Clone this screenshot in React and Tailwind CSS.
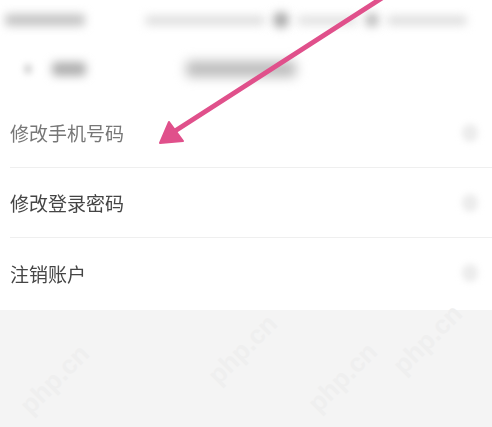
import React from "react";

const rows = ["修改手机号码", "修改登录密码", "注销账户"];

const wm = { fontFamily: '"Liberation Sans", sans-serif' };

export default function App() {
  return (
    <div className="relative w-[492px] h-[427px] overflow-hidden bg-[#f4f4f4]" style={{ fontFamily: '"Noto Sans CJK SC", "Noto Sans", sans-serif' }}>
      <div className="bg-white">
        {/* status bar */}
        <div className="h-[40px] flex items-center px-[5px] gap-[60px]">
          <div className="w-[80px] h-[12px] rounded bg-[#c4c4c4] blur-[5px]" />
          <div className="flex-1 flex items-center gap-2">
            <div className="w-[120px] h-[9px] rounded bg-[#dcdcdc] blur-[5px]" />
            <div className="w-[16px] h-[16px] rounded-full bg-[#a8a8a8] blur-[5px]" />
            <div className="w-[60px] h-[9px] rounded bg-[#e0e0e0] blur-[5px]" />
            <div className="w-[14px] h-[14px] rounded-full bg-[#bababa] blur-[5px]" />
            <div className="w-[80px] h-[9px] rounded bg-[#dcdcdc] blur-[5px]" />
          </div>
        </div>
        {/* nav bar */}
        <div className="h-[58px] flex items-center">
          <div className="ml-[24px] w-[8px] h-[10px] rounded-full bg-[#d4d4d4] blur-[3px]" />
          <div className="ml-[20px] w-[34px] h-[14px] rounded bg-[#b0b0b0] blur-[5px]" />
          <div className="ml-[100px] w-[110px] h-[16px] rounded bg-[#bcbcbc] blur-[6px]" />
        </div>
        {/* rows */}
        {rows.map((t, i) => (
          <div key={t} className="pl-[10px]">
            <div className={`h-[70px] flex items-center justify-between pr-[14px] ${i < 2 ? "border-b border-[#efefef]" : ""}`}>
              <span className={`text-[19px] leading-none ${i === 0 ? "text-[#777]" : "text-[#454545]"} blur-[0.4px]`}>{t}</span>
              <div className="w-[16px] h-[18px] rounded-full bg-[#ececec] blur-[3px]" />
            </div>
          </div>
        ))}
        <div className="h-[2px]" />
      </div>

      {/* watermarks */}
      <div className="absolute left-[12px] top-[360px] -rotate-45 text-[26px] font-bold text-[#efefef]" style={wm}>php.cn</div>
      <div className="absolute left-[200px] top-[330px] -rotate-45 text-[26px] font-bold text-[#efefef]" style={wm}>php.cn</div>
      <div className="absolute left-[300px] top-[358px] -rotate-45 text-[26px] font-bold text-[#efefef]" style={wm}>php.cn</div>
      <div className="absolute left-[385px] top-[320px] -rotate-45 text-[26px] font-bold text-[#efefef]" style={wm}>php.cn</div>

      {/* arrow */}
      <svg className="absolute left-0 top-0" width="492" height="427" viewBox="0 0 492 427">
        <line x1="382" y1="-2" x2="175" y2="131" stroke="#e0508b" strokeWidth="5" strokeLinecap="round" />
        <polygon points="160,143 169,122 183,141" fill="#e0508b" stroke="#e0508b" strokeWidth="2" strokeLinejoin="round" />
      </svg>
    </div>
  );
}
